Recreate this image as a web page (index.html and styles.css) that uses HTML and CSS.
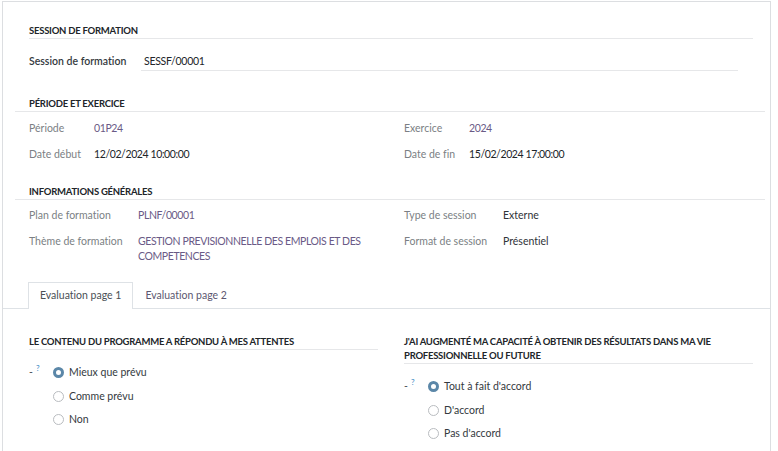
FILE: index.html
```html
<!DOCTYPE html>
<html lang="fr">
<head>
    <meta charset="UTF-8">
    <meta name="viewport" content="width=device-width, initial-scale=1.0">
    <title>Evaluation de session</title>
    <link rel="stylesheet" href="styles.css">
</head>
<body>
    <div class="sheet">
        <div class="main-group">
            <div class="group-title">SESSION DE FORMATION</div>
            <div class="session-row">
                <span class="session-label">Session de formation</span>
                <span class="session-value">SESSF/00001</span>
            </div>
        </div>

        <div class="group">
            <div class="group-title">PÉRIODE ET EXERCICE</div>
            <div class="cols">
                <div class="col short">
                    <div class="field"><span class="label">Période</span><span class="value link">01P24</span></div>
                    <div class="field"><span class="label">Date début</span><span class="value">12/02/2024 10:00:00</span></div>
                </div>
                <div class="col short">
                    <div class="field"><span class="label">Exercice</span><span class="value link">2024</span></div>
                    <div class="field"><span class="label">Date de fin</span><span class="value">15/02/2024 17:00:00</span></div>
                </div>
            </div>
        </div>

        <div class="group">
            <div class="group-title">INFORMATIONS GÉNÉRALES</div>
            <div class="cols tight">
                <div class="col wide-left">
                    <div class="field"><span class="label">Plan de formation</span><span class="value link">PLNF/00001</span></div>
                    <div class="field"><span class="label">Thème de formation</span><span class="value link">GESTION PREVISIONNELLE DES EMPLOIS ET DES COMPETENCES</span></div>
                </div>
                <div class="col wide-right">
                    <div class="field"><span class="label">Type de session</span><span class="value plain">Externe</span></div>
                    <div class="field"><span class="label">Format de session</span><span class="value plain">Présentiel</span></div>
                </div>
            </div>
        </div>

        <div class="tabs">
            <div class="tab active">Evaluation page 1</div>
            <div class="tab">Evaluation page 2</div>
        </div>

        <div class="tab-page">
            <div class="question">
                <div class="q-title">LE CONTENU DU PROGRAMME A RÉPONDU À MES ATTENTES</div>
                <div class="q-body">
                    <span class="q-mark">-<sup>?</sup></span>
                    <div class="radios">
                        <div class="radio checked"><span class="dot"></span>Mieux que prévu</div>
                        <div class="radio"><span class="dot"></span>Comme prévu</div>
                        <div class="radio"><span class="dot"></span>Non</div>
                    </div>
                </div>
            </div>
            <div class="question">
                <div class="q-title">J'AI AUGMENTÉ MA CAPACITÉ À OBTENIR DES RÉSULTATS DANS MA VIE PROFESSIONNELLE OU FUTURE</div>
                <div class="q-body">
                    <span class="q-mark">-<sup>?</sup></span>
                    <div class="radios">
                        <div class="radio checked"><span class="dot"></span>Tout à fait d'accord</div>
                        <div class="radio"><span class="dot"></span>D'accord</div>
                        <div class="radio"><span class="dot"></span>Pas d'accord</div>
                    </div>
                </div>
            </div>
        </div>
    </div>
</body>
</html>
```

FILE: styles.css
```css
* {
    margin: 0;
    padding: 0;
    box-sizing: border-box;
}

body {
    font-family: Lato, 'Liberation Sans', sans-serif;
    font-size: 10.5px;
    font-variant-ligatures: none;
    color: #212529;
    background: #fff;
    padding: 1px 0 0 2px;
    overflow: hidden;
}

.sheet {
    width: 769px;
    min-height: 460px;
    border: 1px solid #dcdee1;
    border-bottom: none;
}

/* groups */
.main-group {
    margin: 22px 17px 0 26px;
}

.group {
    margin: 26px 5px 0 12px;
}

.group + .group {
    margin-top: 22px;
}

.group-title,
.q-title {
    font-size: 9.5px;
    font-weight: 700;
    letter-spacing: -0.25px;
    line-height: 14px;
    border-bottom: 1px solid #e6e7e9;
    color: #212529;
}

.group .group-title {
    padding-left: 14px;
}

.session-row {
    display: flex;
    margin-top: 12px;
    line-height: 18px;
}

.session-label {
    width: 112px;
    font-weight: 600;
    padding-top: 1px;
    color: #343a40;
}

.session-value {
    flex: 1;
    margin-right: 15px;
    padding: 1px 0 0 3px;
    letter-spacing: -0.3px;
    border-bottom: 1px solid #e6e7e9;
}

.cols {
    display: grid;
    grid-template-columns: 1fr 1fr;
    padding-top: 7px;
}

.col {
    display: flex;
    flex-direction: column;
    gap: 8px;
    padding-left: 14px;
}

.field {
    display: flex;
    line-height: 18px;
}

.label {
    color: #7b7f84;
    flex-shrink: 0;
}

.value {
    letter-spacing: -0.4px;
}

.short .label { width: 65px; }
.wide-left .label { width: 109px; }
.wide-right .label { width: 99px; }

.wide-left .value {
    max-width: 245px;
}

.tight {
    padding-top: 8px;
}

.tight .col {
    gap: 11px;
}

.tight .field {
    line-height: 15px;
}

.value.link {
    color: #6a5a86;
}

.value.plain {
    color: #2f3338;
    letter-spacing: 0;
}

/* tabs */
.tabs {
    display: flex;
    margin-top: 18px;
    padding-left: 25px;
    border-bottom: 1px solid #dee2e6;
}

.tab {
    padding: 0 11px;
    line-height: 25px;
    border: 1px solid transparent;
    border-bottom: none;
    margin-bottom: -1px;
    color: #5c5770;
}

.tab.active {
    border-color: #dee2e6;
    background: #fff;
    color: #4a4f55;
    height: 27px;
}

/* evaluation page */
.tab-page {
    display: grid;
    grid-template-columns: 1fr 1fr;
    gap: 26px;
    margin: 26px 17px 0 26px;
}

.q-body {
    display: flex;
    margin-top: 15px;
}

.q-mark {
    width: 24px;
    line-height: 15px;
    color: #495057;
}

.q-mark sup {
    position: relative;
    top: -5px;
    vertical-align: baseline;
    line-height: 0;
    color: #3b8ac4;
    font-size: 8px;
    margin-left: 3px;
}

.radios {
    display: flex;
    flex-direction: column;
    gap: 8.5px;
}

.radio {
    display: flex;
    align-items: center;
    gap: 5px;
    line-height: 15px;
    color: #343a40;
}

.dot {
    width: 11px;
    height: 11px;
    border-radius: 50%;
    border: 1px solid #b9bcc0;
    background: #fff;
}

.radio.checked .dot {
    border: 3.5px solid #5b87a8;
    background: #fff;
}
```
